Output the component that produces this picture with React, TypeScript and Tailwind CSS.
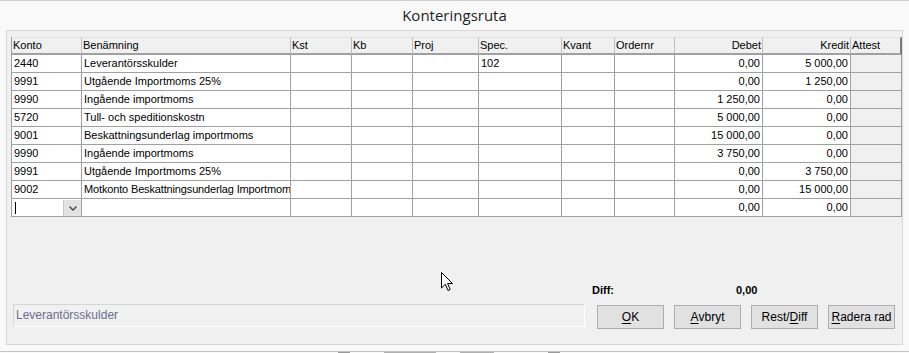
import React from 'react';

const cols = [
  { name: 'Konto', w: 70, right: false },
  { name: 'Benämning', w: 209, right: false },
  { name: 'Kst', w: 61, right: false },
  { name: 'Kb', w: 61, right: false },
  { name: 'Proj', w: 66, right: false },
  { name: 'Spec.', w: 83, right: false },
  { name: 'Kvant', w: 53, right: false },
  { name: 'Ordernr', w: 60, right: false },
  { name: 'Debet', w: 88, right: true },
  { name: 'Kredit', w: 88, right: true },
  { name: 'Attest', w: 51, right: false },
];

const rows = [
  ['2440', 'Leverantörsskulder', '', '', '', '102', '', '', '0,00', '5 000,00'],
  ['9991', 'Utgående Importmoms 25%', '', '', '', '', '', '', '0,00', '1 250,00'],
  ['9990', 'Ingående importmoms', '', '', '', '', '', '', '1 250,00', '0,00'],
  ['5720', 'Tull- och speditionskostn', '', '', '', '', '', '', '5 000,00', '0,00'],
  ['9001', 'Beskattningsunderlag importmoms', '', '', '', '', '', '', '15 000,00', '0,00'],
  ['9990', 'Ingående importmoms', '', '', '', '', '', '', '3 750,00', '0,00'],
  ['9991', 'Utgående Importmoms 25%', '', '', '', '', '', '', '0,00', '3 750,00'],
  ['9002', 'Motkonto Beskattningsunderlag Importmom', '', '', '', '', '', '', '0,00', '15 000,00'],
];

const gridCols = 'grid-cols-[70px_209px_61px_61px_66px_83px_53px_60px_88px_88px_51px]';

function Btn({ children }: { children: React.ReactNode }) {
  return (
    <button className="w-[67px] h-[24px] bg-[#e1e1e1] border border-[#adadad] text-[12px] text-black flex items-center justify-center">
      {children}
    </button>
  );
}

export default function App() {
  return (
    <div
      className="relative w-[909px] h-[353px] overflow-hidden bg-[#f9f9f9] border-t border-[#cfcfcf] text-black"
      style={{ fontFamily: '"Liberation Sans", Arial, sans-serif' }}
    >
      <div className="h-[29px] flex items-center justify-center text-[15px] text-[#1e1e1e]" style={{ fontFamily: '"Open Sans", "Liberation Sans", sans-serif' }}>
        Konteringsruta
      </div>

      <div className="ml-[6px] w-[897px] h-[315px] border border-[#d9d9d9] bg-[#f0f0f0] flex flex-col pl-[4px]">
        <div className={`mt-[6px] w-[890px] grid ${gridCols} border-l border-[#a0a0a0] text-[11px] leading-[17px]`}>
          {cols.map((c, i) => (
            <div
              key={c.name}
              className={
                'h-[18px] bg-[#f0f0f0] border-t border-t-[#e3e3e3] border-b-2 border-b-[#a0a0a0] px-[1px] leading-[15px] whitespace-nowrap overflow-hidden ' +
                (c.right ? 'text-right ' : '') +
                (i === cols.length - 1 ? 'border-r-2 border-r-[#7a7a7a]' : 'border-r border-r-[#c0c0c0]')
              }
            >
              {c.name}
            </div>
          ))}
          {rows.map((r, ri) =>
            cols.map((c, ci) => (
              <div
                key={ri + '-' + ci}
                className={
                  'h-[18px] border-r border-b border-[#a0a0a0] whitespace-nowrap overflow-hidden ' +
                  (c.right ? 'text-right pr-[2px] ' : 'pl-[2px] ') +
                  (ci === 1 && ri === 7 ? 'tracking-[-0.15px] pl-[1px] ' : '') +
                  (ci === cols.length - 1 ? 'bg-[#f0f0f0]' : 'bg-white')
                }
              >
                {r[ci] ?? ''}
              </div>
            ))
          )}
          {cols.map((c, ci) => (
            <div
              key={'e-' + ci}
              className={
                'h-[18px] border-r border-b border-[#a0a0a0] whitespace-nowrap overflow-hidden ' +
                (c.right ? 'text-right pr-[2px] ' : 'pl-[2px] ') +
                (ci === cols.length - 1 ? 'bg-[#f0f0f0]' : 'bg-white')
              }
            >
              {ci === 0 ? (
                <div className="flex h-full items-center">
                  <div className="w-[1px] h-[12px] bg-black ml-[1px]" />
                  <div className="ml-auto w-[18px] h-[16px] mt-[1px] bg-[#e3e3e3] border-l border-[#c8c8c8] flex items-center justify-center">
                    <svg width="8" height="5" viewBox="0 0 8 5">
                      <path d="M0.5 0.5 L4 4 L7.5 0.5" fill="none" stroke="#444" strokeWidth="1.4" />
                    </svg>
                  </div>
                </div>
              ) : ci === 8 || ci === 9 ? (
                '0,00'
              ) : (
                ''
              )}
            </div>
          ))}
        </div>

        <div className="mt-[66px] h-[14px] flex text-[11px] font-bold leading-[14px]">
          <div className="ml-[581px]">Diff:</div>
          <div className="ml-[122px]">0,00</div>
        </div>

        <div className="mt-[7px] flex items-start">
          <div className="ml-[2px] w-[572px] h-[23px] border border-[#d5d5d5] border-b-white border-r-white bg-[#f0f0f0] text-[12px] text-[#6d6d8d] leading-[21px] pl-[2px]">
            Leverantörsskulder
          </div>
          <div className="ml-[12px] mt-[1px] flex gap-[10px]">
            <Btn>
              <u className="underline-offset-2">O</u>K
            </Btn>
            <Btn>
              <u className="underline-offset-2">A</u>vbryt
            </Btn>
            <Btn>
              Rest/<u className="underline-offset-2">D</u>iff
            </Btn>
            <Btn>
              <u className="underline-offset-2">R</u>adera rad
            </Btn>
          </div>
        </div>
      </div>

      <div className="mt-[6px] h-[1px] bg-[#c4c4c4]" />
      <div className="flex h-[2px] gap-[2px]">
        <div className="ml-[338px] w-[12px] bg-[#9a9a9a]" />
        <div className="ml-[32px] w-[52px] bg-[#b0b0b0]" />
        <div className="ml-[22px] w-[34px] bg-[#b0b0b0]" />
        <div className="ml-[52px] w-[12px] bg-[#9a9a9a]" />
      </div>

      <svg className="absolute left-[441px] top-[271px]" width="13" height="20" viewBox="0 0 13 20">
        <path d="M0.5 0.5 L0.5 16 L4.3 12.3 L7 18.5 L9.2 17.5 L6.6 11.5 L11.5 11.5 Z" fill="white" stroke="black" strokeWidth="1" />
      </svg>
    </div>
  );
}
